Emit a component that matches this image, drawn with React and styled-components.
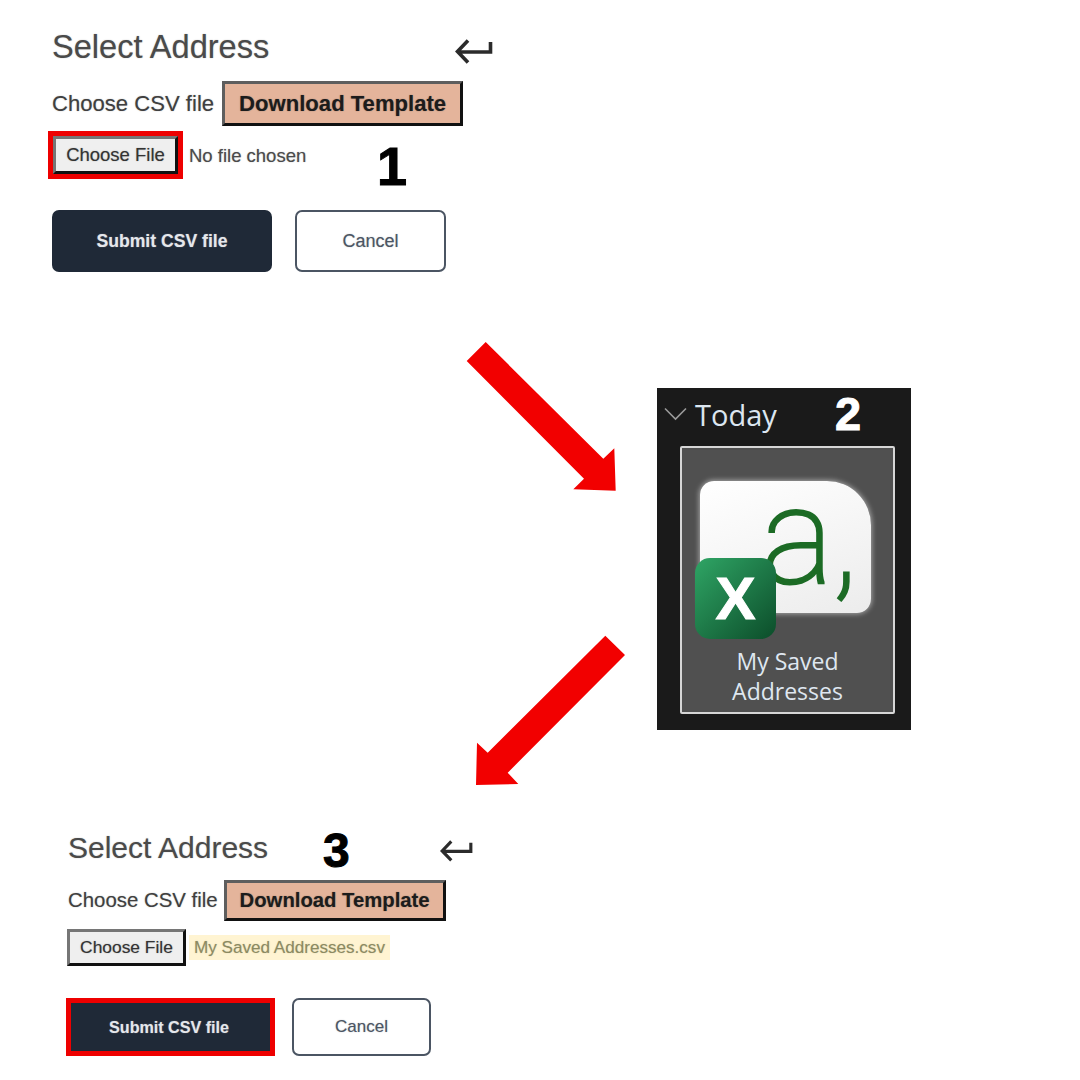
import React from "react";
import styled, { createGlobalStyle, ThemeProvider } from "styled-components";

const Global = createGlobalStyle`
  html, body { margin: 0; padding: 0; background: #fff; }
  body { font-family: "Liberation Sans", Arial, sans-serif; }
`;

const large = {
  heading: 32.6, headingH: 38, rowW: 441, back: 38, backMt: 11,
  label: 22.1, labelGap: 8, tmplMt: 15, tmplW: 241, tmplH: 45, tmplFont: 22.1,
  fileMt: 10, fileMl: 1, fileW: 125, fileH: 38, fileFont: 18.5, nameFont: 18.5, nameGap: 11,
  actMt: 36, submitMl: 0, submitW: 220, submitH: 62, submitFont: 17.6, submitPr: 0,
  cancelGap: 23, cancelW: 151, cancelH: 62, cancelFont: 18,
};
const small = {
  heading: 30, headingH: 36, rowW: 405, back: 33, backMt: 10,
  label: 20.4, labelGap: 6, tmplMt: 14, tmplW: 222, tmplH: 41, tmplFont: 20.3,
  fileMt: 8, fileMl: -1, fileW: 119, fileH: 37, fileFont: 17.4, nameFont: 17.1, nameGap: 3,
  actMt: 32, submitMl: 3, submitW: 199, submitH: 48, submitFont: 16.1, submitPr: 3,
  cancelGap: 22, cancelW: 139, cancelH: 58, cancelFont: 17,
};

const Canvas = styled.div`
  position: relative;
  width: 1080px;
  height: 1080px;
  background: #fff;
  overflow: hidden;
`;

const Form = styled.section`
  position: absolute;
  left: ${(p) => p.$x}px;
  top: ${(p) => p.$y}px;
  display: flex;
  flex-direction: column;
  align-items: flex-start;
  & h2, & label, & button, & span {
    text-shadow: 0 0 1.2px color-mix(in srgb, currentColor 45%, transparent);
  }
`;

const TitleRow = styled.div`
  display: flex;
  justify-content: space-between;
  align-items: flex-start;
  width: ${(p) => p.theme.rowW}px;
  height: ${(p) => p.theme.headingH}px;
`;

const Title = styled.h2`
  margin: 0;
  font-size: ${(p) => p.theme.heading}px;
  line-height: ${(p) => p.theme.headingH}px;
  font-weight: 400;
  color: #4a4a4a;
`;

const BackIcon = styled.svg`
  width: ${(p) => p.theme.back}px;
  height: ${(p) => p.theme.back * 0.66}px;
  margin-top: ${(p) => p.theme.backMt}px;
  flex: none;
`;

const TemplateRow = styled.div`
  display: flex;
  align-items: center;
  gap: ${(p) => p.theme.labelGap}px;
  margin-top: ${(p) => p.theme.tmplMt}px;
`;

const FieldLabel = styled.label`
  font-size: ${(p) => p.theme.label}px;
  color: #3f3f3f;
  white-space: nowrap;
`;

const TemplateButton = styled.button`
  box-sizing: border-box;
  width: ${(p) => p.theme.tmplW}px;
  height: ${(p) => p.theme.tmplH}px;
  padding: 0;
  background: #e4b49b;
  border: 3px solid;
  border-color: #5e5e5e #111 #111 #5e5e5e;
  font-family: inherit;
  font-weight: 700;
  font-size: ${(p) => p.theme.tmplFont}px;
  color: #1c1c1c;
`;

const FileRow = styled.div`
  display: flex;
  align-items: center;
  gap: ${(p) => p.theme.nameGap}px;
  margin-top: ${(p) => p.theme.fileMt}px;
  margin-left: ${(p) => p.theme.fileMl}px;
`;

const ChooseButton = styled.button`
  box-sizing: border-box;
  width: ${(p) => p.theme.fileW}px;
  height: ${(p) => p.theme.fileH}px;
  padding: 0;
  background: #efefef;
  border: 3px solid;
  border-color: #767676 #111 #111 #767676;
  font-family: inherit;
  font-size: ${(p) => p.theme.fileFont}px;
  color: #333;
  box-shadow: ${(p) => (p.$ring ? "0 0 0 5px #ee0000" : "none")};
`;

const FileName = styled.span`
  font-size: ${(p) => p.theme.nameFont}px;
  line-height: 25px;
  white-space: nowrap;
  color: ${(p) => (p.$picked ? "#8c8a62" : "#4a4a4a")};
  background: ${(p) => (p.$picked ? "#fff4d2" : "transparent")};
  padding: ${(p) => (p.$picked ? "0 5px" : "0")};
`;

const Actions = styled.div`
  display: flex;
  align-items: center;
  gap: ${(p) => p.theme.cancelGap}px;
  margin-top: ${(p) => p.theme.actMt}px;
`;

const SubmitButton = styled.button`
  box-sizing: border-box;
  width: ${(p) => p.theme.submitW}px;
  height: ${(p) => p.theme.submitH}px;
  margin-left: ${(p) => p.theme.submitMl}px;
  padding: 0 ${(p) => p.theme.submitPr}px 0 0;
  background: #1f2937;
  border: 0;
  border-radius: ${(p) => (p.$ring ? 0 : 7)}px;
  font-family: inherit;
  font-weight: 700;
  font-size: ${(p) => p.theme.submitFont}px;
  color: #e5e7eb;
  box-shadow: ${(p) => (p.$ring ? "0 0 0 5px #ee0000" : "none")};
`;

const CancelButton = styled.button`
  box-sizing: border-box;
  width: ${(p) => p.theme.cancelW}px;
  height: ${(p) => p.theme.cancelH}px;
  padding: 0;
  background: #fff;
  border: 2px solid #4b5563;
  border-radius: 7px;
  font-family: inherit;
  font-size: ${(p) => p.theme.cancelFont}px;
  color: #4b5563;
`;

const Step = styled.span`
  position: absolute;
  left: ${(p) => p.$x}px;
  top: ${(p) => p.$y}px;
  font-size: ${(p) => p.$size}px;
  line-height: 1;
  font-weight: 700;
  color: ${(p) => p.$color || "#000"};
  -webkit-text-stroke: 1px ${(p) => p.$color || "#000"};
`;

const Arrow = styled.svg`
  position: absolute;
  left: 0;
  top: 0;
  width: 1080px;
  height: 1080px;
  pointer-events: none;
`;

const Explorer = styled.section`
  position: absolute;
  left: 657px;
  top: 388px;
  width: 254px;
  height: 342px;
  box-sizing: border-box;
  padding-left: 7px;
  background: #1a1a1a;
  font-family: "Open Sans", "Noto Sans", sans-serif;
`;

const GroupHeader = styled.div`
  display: flex;
  align-items: center;
  gap: 8px;
  height: 52px;
  color: #dce6f0;
  font-size: 29px;
`;

const Tile = styled.div`
  position: relative;
  box-sizing: border-box;
  width: 215px;
  height: 268px;
  margin: 6px 0 0 16px;
  padding-top: 33px;
  background: #505050;
  border: 2px solid #d6d6d6;
  border-radius: 2px;
  display: flex;
  flex-direction: column;
  align-items: center;
`;

const Card = styled.div`
  box-sizing: border-box;
  width: 171px;
  height: 132px;
  margin-left: -4px;
  padding-left: 62px;
  display: flex;
  align-items: flex-start;
  color: #1c6b25;
  background: linear-gradient(160deg, #ffffff, #ececec);
  border-radius: 14px 44px 14px 14px;
  box-shadow: 0 0 5px 1px #a5a5a5;
  font-family: "Roboto", sans-serif;
  font-weight: 100;
  font-size: 134px;
  line-height: 114px;
  -webkit-text-stroke: 3px #1c6b25;
`;

const ExcelBadge = styled.div`
  position: absolute;
  left: 13px;
  top: 110px;
  width: 81px;
  height: 81px;
  display: flex;
  align-items: center;
  justify-content: center;
  border-radius: 15px;
  background: linear-gradient(135deg, #2fa565, #0c4d2a);
  color: #fff;
  font-family: "Liberation Sans", sans-serif;
  font-weight: 700;
  font-size: 60px;
  -webkit-text-stroke: 1px #fff;
`;

const TileLabel = styled.div`
  width: 100%;
  margin-top: 33px;
  text-align: center;
  font-size: 23px;
  line-height: 30px;
  color: #dfe7f0;
`;

function AddressForm({ x, y, theme, fileName, ringChoose, ringSubmit }) {
  return (
    <ThemeProvider theme={theme}>
      <Form $x={x} $y={y}>
        <TitleRow>
          <Title>Select Address</Title>
          <BackIcon viewBox="0 0 38 25" fill="none" stroke="#2b2b2b" strokeWidth="3.6">
            <path d="M13 1.5 2.5 12.5l10.5 11M3 13H35.5V3" />
          </BackIcon>
        </TitleRow>
        <TemplateRow>
          <FieldLabel>Choose CSV file</FieldLabel>
          <TemplateButton>Download Template</TemplateButton>
        </TemplateRow>
        <FileRow>
          <ChooseButton $ring={ringChoose}>Choose File</ChooseButton>
          <FileName $picked={!!fileName}>{fileName || "No file chosen"}</FileName>
        </FileRow>
        <Actions>
          <SubmitButton $ring={ringSubmit}>Submit CSV file</SubmitButton>
          <CancelButton>Cancel</CancelButton>
        </Actions>
      </Form>
    </ThemeProvider>
  );
}

export default function App() {
  return (
    <Canvas>
      <Global />
      <AddressForm x={52} y={28} theme={large} ringChoose />
      <Step $x={377} $y={139} $size={54}>1</Step>

      <Arrow viewBox="0 0 1080 1080">
        <polygon fill="#f20000" points="466.7,361 485.7,342 603.3,458.7 614.3,448.3 615.7,490.7 573.3,489.3 584,478.7" />
        <polygon fill="#f20000" points="605.3,635.7 625,655 507.7,772.7 518.3,784 476,785 477,742.7 487.7,752.7" />
      </Arrow>

      <Explorer>
        <GroupHeader>
          <svg width="23" height="14" viewBox="0 0 23 14" fill="none" stroke="#9a9a9a" strokeWidth="1.6">
            <path d="M1 1.5 11.5 12 22 1.5" />
          </svg>
          Today
        </GroupHeader>
        <Tile>
          <Card>a,</Card>
          <ExcelBadge>X</ExcelBadge>
          <TileLabel>My Saved<br />Addresses</TileLabel>
        </Tile>
      </Explorer>
      <Step $x={835} $y={390} $size={47} $color="#fff">2</Step>

      <AddressForm x={68} y={830} theme={small} fileName="My Saved Addresses.csv" ringSubmit />
      <Step $x={323} $y={827} $size={48}>3</Step>
    </Canvas>
  );
}
